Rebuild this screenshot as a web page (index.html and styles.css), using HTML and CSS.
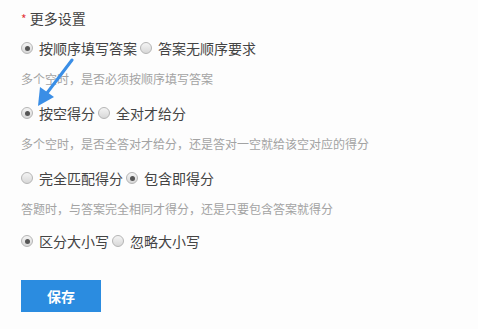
FILE: index.html
```html
<!DOCTYPE html>
<html lang="zh-CN">
<head>
    <meta charset="UTF-8">
    <title>更多设置</title>
    <link rel="stylesheet" href="styles.css">
</head>
<body>
    <div class="settings">
        <div class="field-title"><span class="required">*</span> 更多设置</div>

        <div class="options first">
            <label><input type="radio" name="order" checked>按顺序填写答案</label>
            <label><input type="radio" name="order">答案无顺序要求</label>
        </div>
        <div class="hint">多个空时，是否必须按顺序填写答案</div>

        <div class="options">
            <label><input type="radio" name="score" checked>按空得分</label>
            <label><input type="radio" name="score">全对才给分</label>
        </div>
        <div class="hint">多个空时，是否全答对才给分，还是答对一空就给该空对应的得分</div>

        <div class="options">
            <label><input type="radio" name="match">完全匹配得分</label>
            <label><input type="radio" name="match" checked>包含即得分</label>
        </div>
        <div class="hint">答题时，与答案完全相同才得分，还是只要包含答案就得分</div>

        <div class="options last">
            <label><input type="radio" name="case" checked>区分大小写</label>
            <label><input type="radio" name="case">忽略大小写</label>
        </div>

        <button class="save-btn">保存</button>

        <svg class="arrow" width="60" height="60" viewBox="0 0 60 60">
            <line x1="50" y1="2" x2="25" y2="35" stroke="#3a8ee6" stroke-width="3" stroke-linecap="round"/>
            <polygon points="16,48 18,29 32,39" fill="#3a8ee6"/>
        </svg>
    </div>
</body>
</html>
```

FILE: styles.css
```css
body {
    margin: 0;
    background: #fdfdfd;
    font-family: "Noto Sans CJK SC", "Microsoft YaHei", sans-serif;
    color: #444;
}
.settings {
    position: relative;
    padding: 8px 21px 20px;
}
.field-title {
    font-size: 14px;
    line-height: 20px;
}
.required {
    color: #e4393c;
    font-size: 12px;
}
.options {
    display: flex;
    align-items: center;
    margin-top: 14px;
    font-size: 14px;
    line-height: 20px;
}
.options.first {
    margin-top: 9px;
}
.options.last {
    margin-top: 12px;
}
.options label {
    display: flex;
    align-items: center;
}
.options input {
    appearance: none;
    -webkit-appearance: none;
    width: 12px;
    height: 12px;
    margin: 0 6px 0 3px;
    border: 1px solid #b5b5b5;
    border-radius: 50%;
    background: linear-gradient(#f4f4f4, #d8d8d8);
    position: relative;
}
.options label:first-child input {
    margin-left: 0;
}
.options input:checked::after {
    content: "";
    position: absolute;
    left: 2.5px;
    top: 2.5px;
    width: 5px;
    height: 5px;
    border-radius: 50%;
    background: #555;
}
.hint {
    margin-top: 11px;
    font-size: 12px;
    line-height: 20px;
    color: #a3a3a3;
}
.save-btn {
    display: block;
    margin-top: 29px;
    width: 80px;
    height: 32px;
    border: none;
    background-color: #2b8ce0;
    color: white;
    font-family: inherit;
    font-size: 14px;
    font-weight: bold;
    cursor: pointer;
}
.arrow {
    position: absolute;
    left: 22px;
    top: 58px;
}
```
